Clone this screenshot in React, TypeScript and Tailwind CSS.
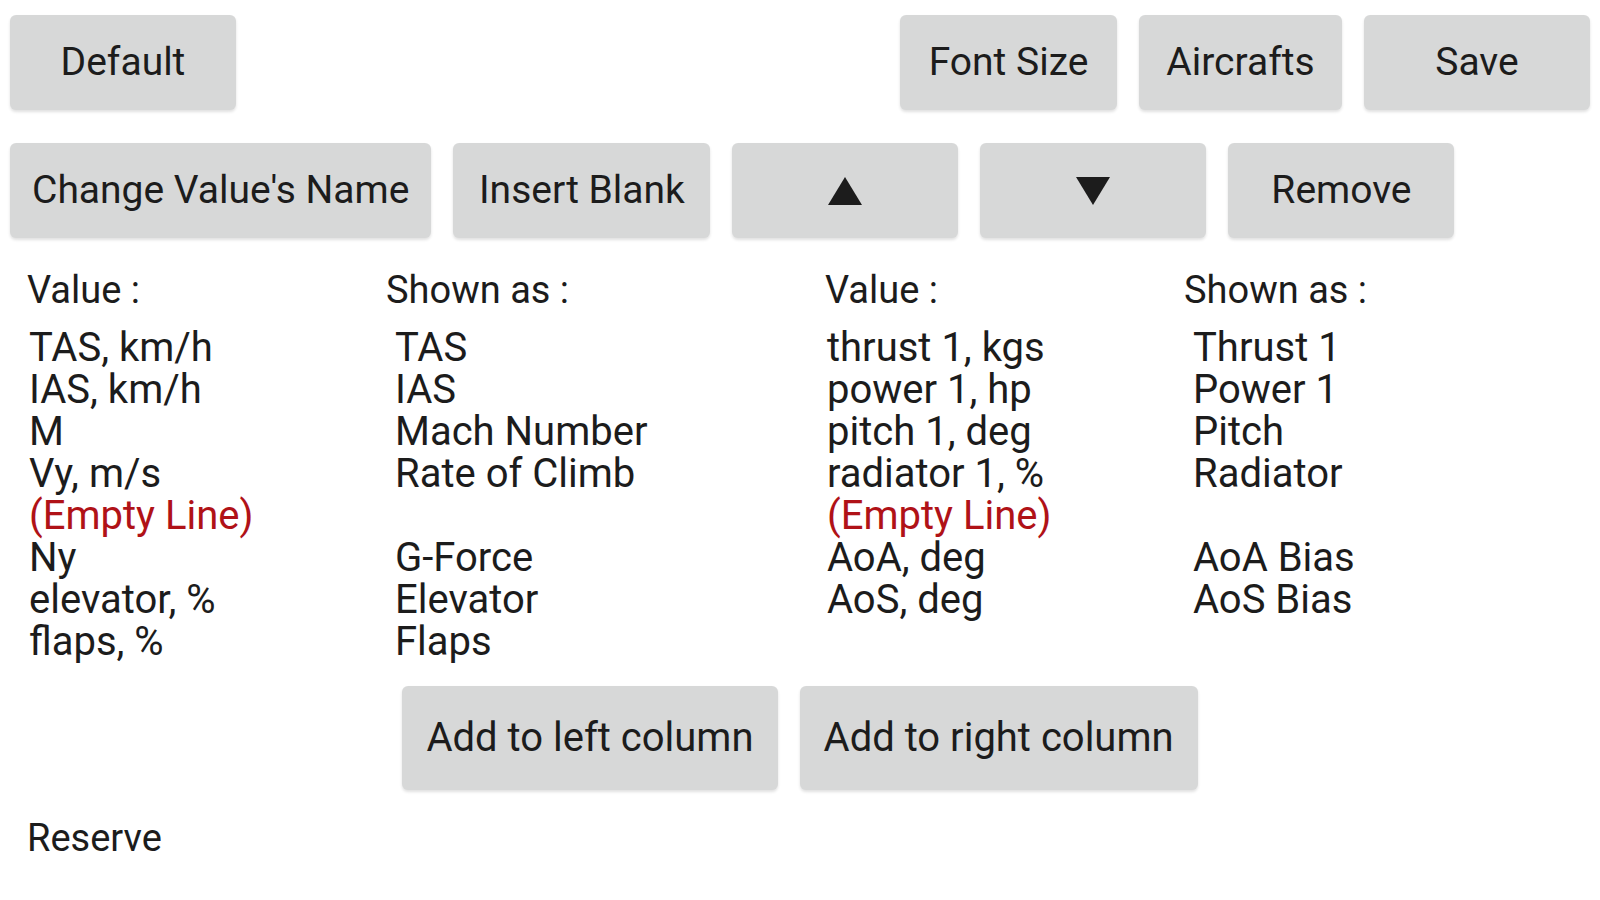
import React from "react";

type Row = { value: string; shown: string; blank?: boolean };

const LEFT: Row[] = [
  { value: "TAS, km/h", shown: "TAS" },
  { value: "IAS, km/h", shown: "IAS" },
  { value: "M", shown: "Mach Number" },
  { value: "Vy, m/s", shown: "Rate of Climb" },
  { value: "(Empty Line)", shown: "", blank: true },
  { value: "Ny", shown: "G-Force" },
  { value: "elevator, %", shown: "Elevator" },
  { value: "flaps, %", shown: "Flaps" },
];

const RIGHT: Row[] = [
  { value: "thrust 1, kgs", shown: "Thrust 1" },
  { value: "power 1, hp", shown: "Power 1" },
  { value: "pitch 1, deg", shown: "Pitch" },
  { value: "radiator 1, %", shown: "Radiator" },
  { value: "(Empty Line)", shown: "", blank: true },
  { value: "AoA, deg", shown: "AoA Bias" },
  { value: "AoS, deg", shown: "AoS Bias" },
];

function Btn({ children, tall, w }: { children: React.ReactNode; tall?: boolean; w?: string }) {
  return (
    <button
      className={`flex items-center justify-center rounded-[6px] bg-[#d7d8d8] text-[#1c1c1c] shadow-[0_2px_3px_rgba(0,0,0,0.12)] ${
        tall ? "h-[104px] px-[24px] text-[40px]" : "h-[95px] px-[22px] text-[39px]"
      } ${w ?? "min-w-[226px]"}`}
    >
      {children}
    </button>
  );
}

function Tri({ up }: { up?: boolean }) {
  return (
    <svg width="36" height="30" viewBox="0 0 36 30">
      <polygon points={up ? "18,1 35,29 1,29" : "1,1 35,1 18,29"} fill="#1c1c1c" />
    </svg>
  );
}

// value column + its "shown as" column
function Column({ rows }: { rows: Row[] }) {
  return (
    <>
      <div className="flex flex-col">
        {rows.map((r, i) => (
          <span key={i} className={`h-[42px] pl-[2px] leading-[42px] ${r.blank ? "text-[#b01217]" : ""}`}>
            {r.value}
          </span>
        ))}
      </div>
      <div className="flex flex-col">
        {rows.map((r, i) => (
          <span key={i} className="h-[42px] pl-[9px] leading-[42px]">
            {r.shown}
          </span>
        ))}
      </div>
    </>
  );
}

export default function App() {
  return (
    <div className="h-[900px] w-[1600px] bg-white font-['Roboto',sans-serif] text-[#1c1c1c]">
      <div className="flex justify-between pl-[10px] pr-[10px] pt-[15px]">
        <Btn>Default</Btn>
        <div className="flex gap-[22px]">
          <Btn w="min-w-[217px]">Font Size</Btn>
          <Btn w="min-w-[203px]">Aircrafts</Btn>
          <Btn>Save</Btn>
        </div>
      </div>

      <div className="mt-[33px] flex gap-[22px] pl-[10px]">
        <Btn>Change Value's Name</Btn>
        <Btn w="min-w-[257px]">Insert Blank</Btn>
        <Btn>
          <Tri up />
        </Btn>
        <Btn>
          <Tri />
        </Btn>
        <Btn>Remove</Btn>
      </div>

      <div className="mt-[31px] grid grid-cols-[359px_439px_359px_1fr] pl-[27px] text-[38px]">
        <span className="leading-[42px]">Value :</span>
        <span className="leading-[42px]">Shown as :</span>
        <span className="leading-[42px]">Value :</span>
        <span className="leading-[42px]">Shown as :</span>
      </div>

      <div className="mt-[16px] grid grid-cols-[359px_439px_359px_1fr] pl-[27px] text-[40px]">
        <Column rows={LEFT} />
        <Column rows={RIGHT} />
      </div>

      <div className="mt-[23px] flex justify-center gap-[22px]">
        <Btn tall>Add to left column</Btn>
        <Btn tall>Add to right column</Btn>
      </div>

      <div className="mt-[27px] pl-[27px] text-[38px] leading-[42px]">Reserve</div>
    </div>
  );
}
